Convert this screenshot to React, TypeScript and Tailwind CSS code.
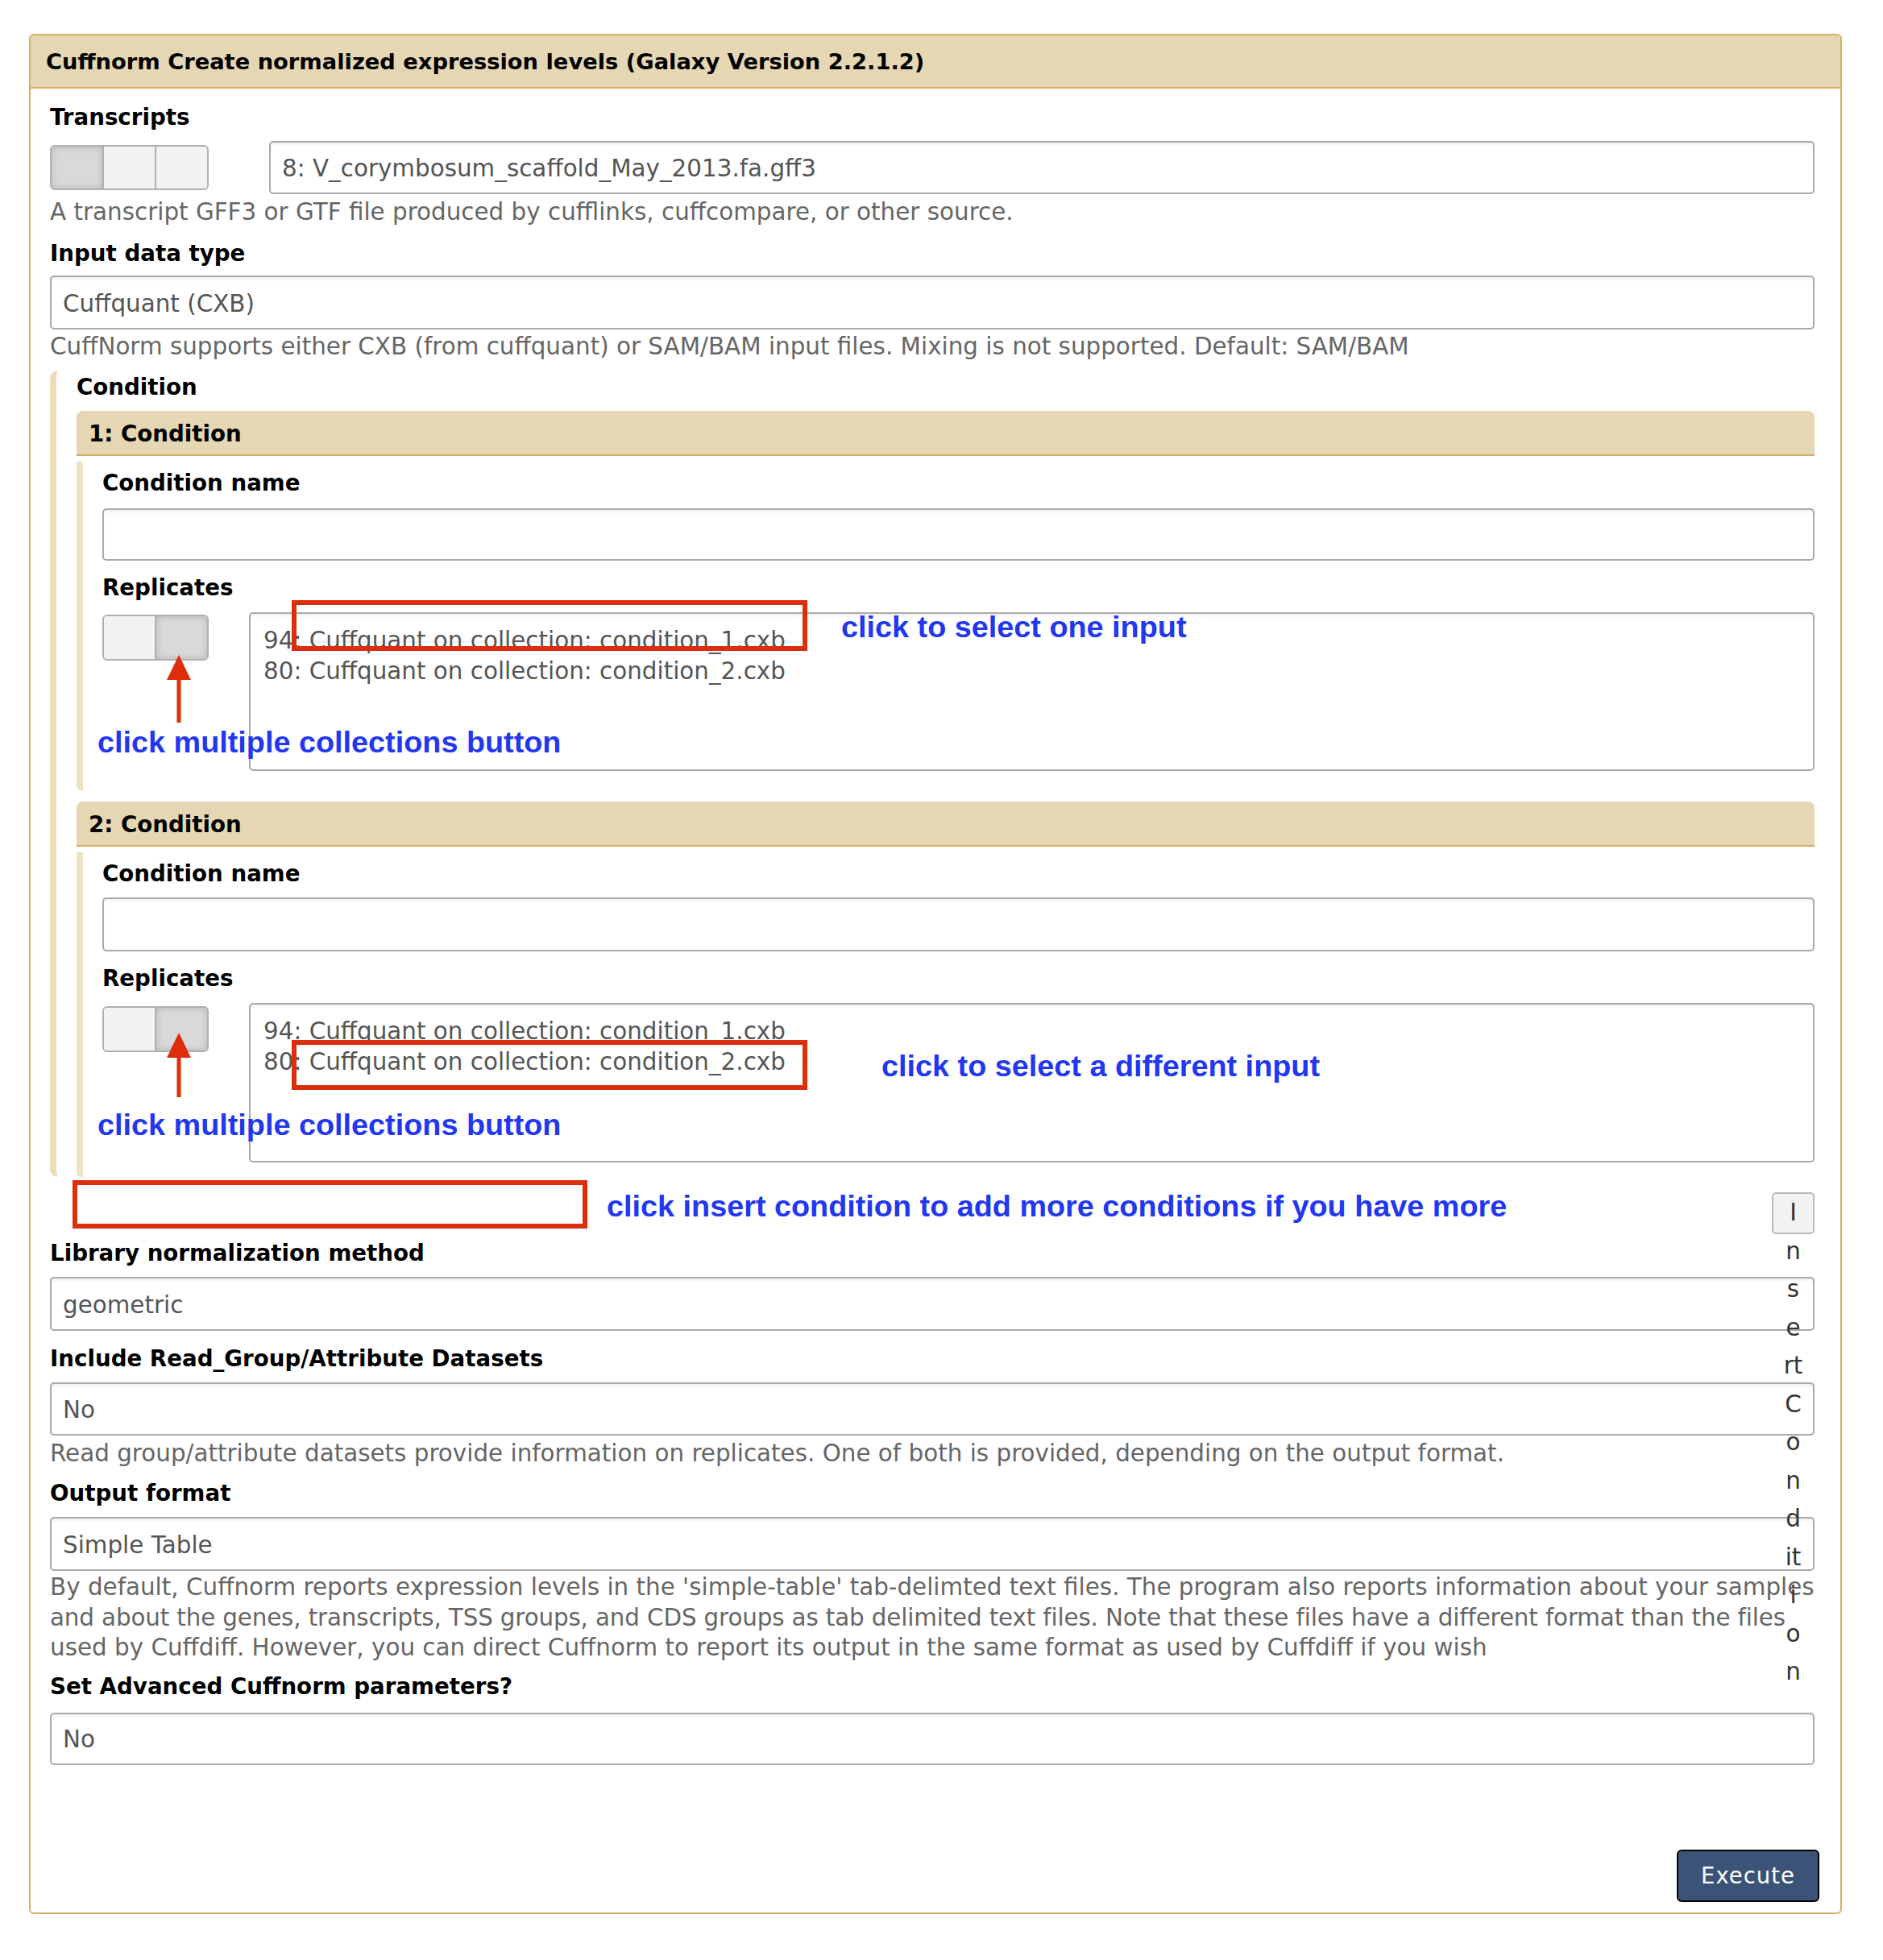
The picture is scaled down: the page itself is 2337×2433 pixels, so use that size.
import React from "react";

// ---------------------------------------------------------------------------
// Small building blocks
// ---------------------------------------------------------------------------

const BOX =
  "flex items-center rounded-[5px] border-2 border-[#aaaaaa] bg-white pl-[14px] pt-[3px] text-[29.4px] text-[#555] shadow-[inset_0_4px_4px_-2px_rgba(0,0,0,0.07)]";

const ANNOT =
  "absolute whitespace-nowrap font-['Liberation_Sans',Arial,sans-serif] text-[37.8px] font-bold leading-[44px] text-[#2237f0]";

function Label({ children, className = "" }: { children: React.ReactNode; className?: string }) {
  return (
    <div
      className={`flex h-[50px] items-center whitespace-nowrap pt-[3px] text-[27.7px] font-bold text-black ${className}`}
    >
      {children}
    </div>
  );
}

function Help({ children, className = "" }: { children: React.ReactNode; className?: string }) {
  return (
    <div className={`flex h-[38px] items-center whitespace-nowrap pt-[3px] text-[29.4px] text-[#666] ${className}`}>
      {children}
    </div>
  );
}

function Toggle({ count, active, h }: { count: number; active: number; h: string }) {
  return (
    <div className={`flex shrink-0 overflow-hidden rounded-[6px] border-2 border-[#b0b0b0] ${h}`}>
      {Array.from({ length: count }).map((_, i) => (
        <div
          key={i}
          className={`${i > 0 ? "w-[65px] border-l-2 border-[#b0b0b0]" : "w-[63px]"} ${
            i === active
              ? "bg-[#d9d9d9] shadow-[inset_0_0_8px_rgba(0,0,0,0.18)]"
              : "bg-[#f2f2f2]"
          }`}
        />
      ))}
    </div>
  );
}

function RedBox({ className }: { className: string }) {
  return <div className={`absolute border-[6px] border-[#dc2d0c] ${className}`} />;
}

function Arrow({ className, length }: { className: string; length: number }) {
  return (
    <svg className={`absolute ${className}`} width="32" height={length} viewBox={`0 0 32 ${length}`}>
      <polygon points="16,0 1,31 31,31" fill="#dc2d0c" />
      <rect x="13.5" y="28" width="5" height={length - 28} fill="#dc2d0c" />
    </svg>
  );
}

const ITEMS = [
  "94: Cuffquant on collection: condition_1.cxb",
  "80: Cuffquant on collection: condition_2.cxb",
];

function ReplicateList({ h }: { h: string }) {
  return (
    <div
      className={`flex-1 rounded-[5px] border-2 border-[#aaaaaa] bg-white pl-[16px] pt-[14px] text-[29.4px] leading-[38px] text-[#555] shadow-[inset_0_4px_4px_-2px_rgba(0,0,0,0.07)] ${h}`}
    >
      {ITEMS.map((it) => (
        <div key={it} className="whitespace-nowrap">
          {it}
        </div>
      ))}
    </div>
  );
}

// ---------------------------------------------------------------------------
// Condition block
// ---------------------------------------------------------------------------

function ConditionBlock({ n, second }: { n: number; second?: boolean }) {
  return (
    <div className={second ? "mt-[14px]" : "mt-[12px]"}>
      <div className="flex h-[56px] items-center rounded-t-[8px] border-b-2 border-[#d4b062] bg-[#e5d7b3] pl-[15px] pt-[3px] text-[27.7px] font-bold text-black">
        {n}: Condition
      </div>
      <div
        className={`rounded-bl-[6px] border-l-[8px] border-[#ece2c4] pl-[24px] ${
          second ? "pb-[18px]" : "pb-[24px]"
        }`}
      >
        <Label className="mt-[7px]">Condition name</Label>
        <div className={`${BOX} ${second ? "mt-[6px] h-[67px]" : "mt-[8px] h-[65px]"}`} />
        <Label className="mt-[7px]">Replicates</Label>

        <div className={`relative mt-[7px] flex items-start gap-[50px] ${second ? "h-[198px]" : "h-[197px]"}`}>
          <div className={second ? "mt-[4px]" : "mt-[3px]"}>
            <Toggle count={2} active={1} h="h-[57px]" />
          </div>
          <ReplicateList h={second ? "h-[198px]" : "h-[197px]"} />

          {/* annotations */}
          {second ? (
            <>
              <RedBox className="left-[235px] top-[46px] h-[62px] w-[640px]" />
              <div className={`${ANNOT} left-[967px] top-[56px]`}>click to select a different input</div>
              <Arrow className="left-[79px] top-[37px]" length={80} />
              <div className={`${ANNOT} left-[-6px] top-[129px]`}>click multiple collections button</div>
            </>
          ) : (
            <>
              <RedBox className="left-[235px] top-[-15px] h-[63px] w-[640px]" />
              <div className={`${ANNOT} left-[917px] top-[-4px]`}>click to select one input</div>
              <Arrow className="left-[79px] top-[53px]" length={84} />
              <div className={`${ANNOT} left-[-6px] top-[139px]`}>click multiple collections button</div>
            </>
          )}
        </div>
      </div>
    </div>
  );
}

// ---------------------------------------------------------------------------
// Page
// ---------------------------------------------------------------------------

const INSERT_LINES = ["I", "n", "s", "e", "rt", "C", "o", "n", "d", "it", "i", "o", "n"];

export default function App() {
  return (
    <div className="min-h-[2433px] w-[2337px] bg-white pt-[42px] font-['DejaVu_Sans',sans-serif]">
      <div className="ml-[36px] w-[2250px] rounded-[6px] border-2 border-[#d4b062]">
        {/* Title bar */}
        <div className="flex h-[66px] items-center rounded-t-[4px] border-b-2 border-[#d4b062] bg-[#e5d7b3] pl-[19px] pt-[3px] text-[27.3px] font-bold text-black">
          Cuffnorm Create normalized expression levels (Galaxy Version 2.2.1.2)
        </div>

        <div className="pb-[13px] pl-[24px] pr-[32px] pt-[9px]">
          <Label>Transcripts</Label>
          <div className="mt-[6px] flex h-[66px] items-center gap-[75px]">
            <Toggle count={3} active={0} h="h-[56px]" />
            <div className={`${BOX} h-[66px] flex-1`}>8: V_corymbosum_scaffold_May_2013.fa.gff3</div>
          </div>
          <Help className="mt-[2px]">
            A transcript GFF3 or GTF file produced by cufflinks, cuffcompare, or other source.
          </Help>

          <Label className="mt-[7px]">Input data type</Label>
          <div className={`${BOX} mt-[4px] h-[67px]`}>Cuffquant (CXB)</div>
          <Help className="mt-[1px]">
            CuffNorm supports either CXB (from cuffquant) or SAM/BAM input files. Mixing is not supported. Default:
            SAM/BAM
          </Help>

          {/* Condition repeat */}
          <div className="mt-[12px] rounded-l-[10px] border-l-[8px] border-[#e9dcb6] pl-[25px]">
            <div className="flex h-[38px] items-center pt-[3px] text-[27.7px] font-bold text-black">Condition</div>
            <ConditionBlock n={1} />
            <ConditionBlock n={2} second />
          </div>

          {/* Insert row */}
          <div className="relative flex h-[68px] justify-end">
            <RedBox className="left-[28px] top-[4px] h-[60px] w-[639px]" />
            <div className={`${ANNOT} left-[691px] top-[14px]`}>
              click insert condition to add more conditions if you have more
            </div>
            <div className="relative mt-[19px] h-[52px] w-[53px] rounded-[5px] border-2 border-[#bbbbbb] bg-[#f2f2f2]">
              <div className="absolute left-0 right-0 top-[0px] flex flex-col items-center text-[29.4px] leading-[47.5px] text-[#333]">
                {INSERT_LINES.map((l, i) => (
                  <span key={i}>{l}</span>
                ))}
              </div>
            </div>
          </div>

          <Label>Library normalization method</Label>
          <div className={`${BOX} mt-[6px] h-[67px]`}>geometric</div>

          <Label className="mt-[8px]">Include Read_Group/Attribute Datasets</Label>
          <div className={`${BOX} mt-[6px] h-[66px]`}>No</div>
          <Help className="mt-[2px]">
            Read group/attribute datasets provide information on replicates. One of both is provided, depending on the
            output format.
          </Help>

          <Label className="mt-[5px]">Output format</Label>
          <div className={`${BOX} mt-[6px] h-[67px]`}>Simple Table</div>
          <div className="mt-[1px] h-[112.5px] whitespace-nowrap pt-[1px] text-[29.4px] leading-[37.5px] text-[#666]">
            By default, Cuffnorm reports expression levels in the 'simple-table' tab-delimted text files. The program
            also reports information about your samples
            <br />
            <span className="tracking-[-0.15px]">
              and about the genes, transcripts, TSS groups, and CDS groups as tab delimited text files. Note that these
              files have a different format than the files
            </span>
            <br />
            used by Cuffdiff. However, you can direct Cuffnorm to report its output in the same format as used by
            Cuffdiff if you wish
          </div>

          <Label className="mt-[4px]">Set Advanced Cuffnorm parameters?</Label>
          <div className={`${BOX} mt-[8px] h-[65px]`}>No</div>

          <div className="mt-[105px] flex justify-end">
            <button className="-mr-[6px] h-[65px] w-[177px] rounded-[6px] border-2 border-black bg-[#3c5378] pt-[2px] text-[27.5px] tracking-[1px] text-white">
              Execute
            </button>
          </div>
        </div>
      </div>
    </div>
  );
}
